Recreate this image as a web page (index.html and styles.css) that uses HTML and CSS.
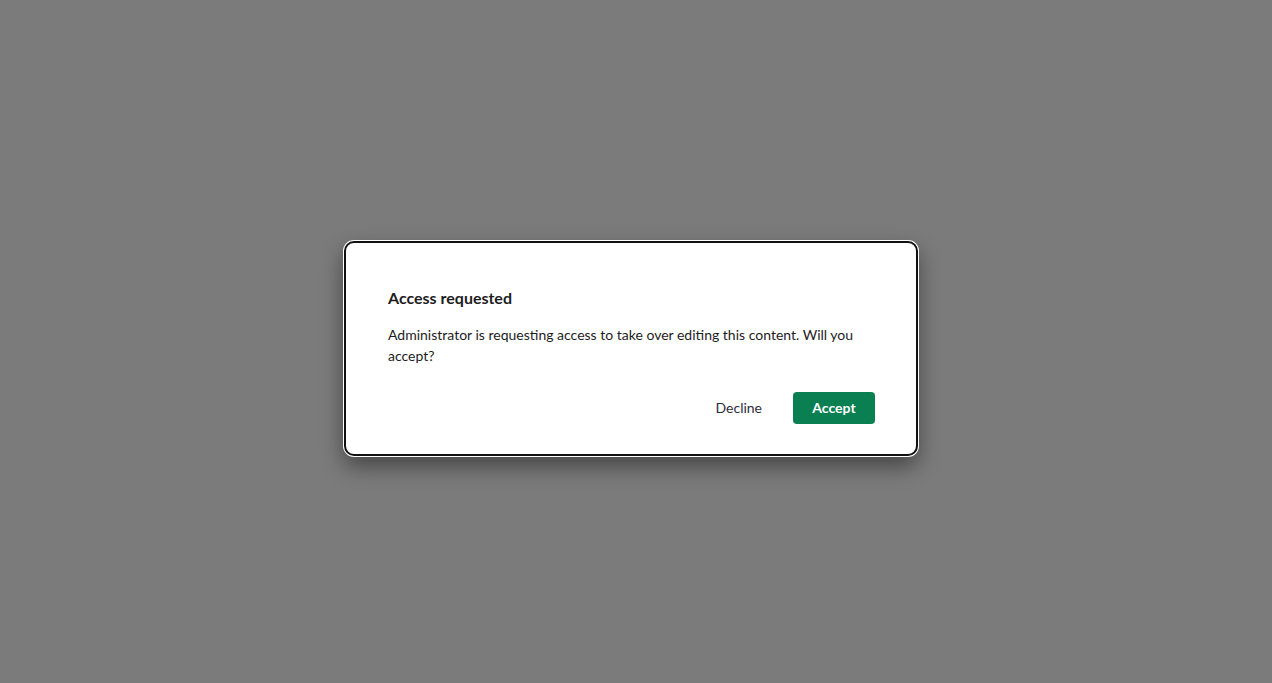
FILE: index.html
```html
<!DOCTYPE html>
<html lang="en">
<head>
    <meta charset="UTF-8">
    <meta name="viewport" content="width=device-width, initial-scale=1.0">
    <title>Access requested</title>
    <link rel="stylesheet" href="styles.css">
</head>
<body>
    <div class="overlay">
        <div class="dialog" role="dialog" aria-labelledby="dialogTitle">
            <h1 id="dialogTitle" class="dialog-title">Access requested</h1>
            <p class="dialog-text">Administrator is requesting access to take over editing this content. Will you accept?</p>
            <div class="dialog-actions">
                <button class="btn btn-plain">Decline</button>
                <button class="btn btn-primary">Accept</button>
            </div>
        </div>
    </div>
</body>
</html>
```

FILE: styles.css
```css
/* styles.css */
body {
    margin: 0;
    font-family: Lato, "Noto Sans", Arial, sans-serif;
    background-color: #7b7b7b;
}

.overlay {
    height: 100vh;
    display: flex;
    justify-content: center;
    align-items: center;
}

.dialog {
    box-sizing: border-box;
    width: 574px;
    margin: 13px 10px 0 0;
    padding: 44px 41px 30px 42px;
    background-color: #ffffff;
    border: 2px solid #111111;
    border-radius: 10px;
    box-shadow: 0 0 0 1px #ffffff, 0 10px 22px rgba(0, 0, 0, 0.45);
    color: #1d1c1d;
}

.dialog-title {
    margin: 0 0 15px;
    font-size: 16px;
    line-height: 22px;
    font-weight: 700;
}

.dialog-text {
    margin: 0;
    font-size: 14px;
    line-height: 21px;
}

.dialog-actions {
    display: flex;
    justify-content: flex-end;
    gap: 15px;
    margin-top: 26px;
}

.btn {
    height: 32px;
    padding: 0 16px;
    border: none;
    border-radius: 4px;
    font-family: inherit;
    font-size: 14px;
    cursor: pointer;
}

.btn-plain {
    background: none;
    color: #2c2d3a;
}

.btn-primary {
    min-width: 82px;
    background-color: #0a7f52;
    color: #ffffff;
    font-weight: 700;
}
```
